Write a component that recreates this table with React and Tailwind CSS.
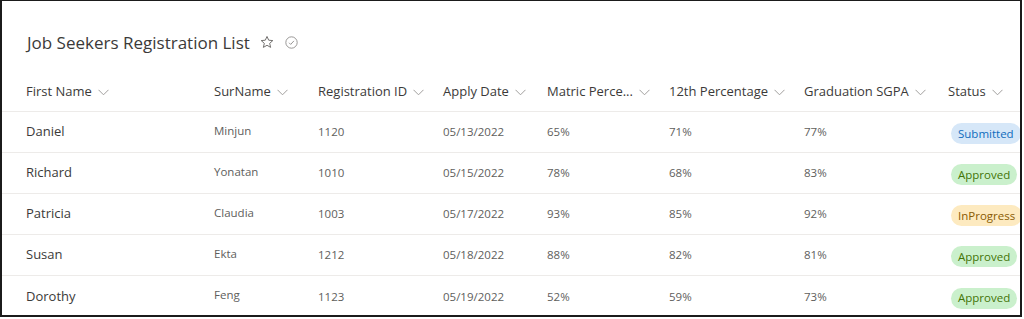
const font = { fontFamily: '"Open Sans", "Noto Sans", sans-serif' };

const columns = [
  { label: "First Name", w: "w-[188px]" },
  { label: "SurName", w: "w-[104px]" },
  { label: "Registration ID", w: "w-[125px]" },
  { label: "Apply Date", w: "w-[104px]" },
  { label: "Matric Perce...", w: "w-[122px]" },
  { label: "12th Percentage", w: "w-[135px]" },
  { label: "Graduation SGPA", w: "w-[144px]" },
  { label: "Status", w: "w-[70px]" },
];

const rows = [
  ["Daniel", "Minjun", "1120", "05/13/2022", "65%", "71%", "77%", "Submitted"],
  ["Richard", "Yonatan", "1010", "05/15/2022", "78%", "68%", "83%", "Approved"],
  ["Patricia", "Claudia", "1003", "05/17/2022", "93%", "85%", "92%", "InProgress"],
  ["Susan", "Ekta", "1212", "05/18/2022", "88%", "82%", "81%", "Approved"],
  ["Dorothy", "Feng", "1123", "05/19/2022", "52%", "59%", "73%", "Approved"],
];

const badgeStyles = {
  Submitted: "bg-[#d6e7f8] text-[#0f6cbd]",
  Approved: "bg-[#caf0cc] text-[#437406]",
  InProgress: "bg-[#fdeac0] text-[#8a5b00]",
};

function Chevron() {
  return (
    <svg width="11" height="7" viewBox="0 0 11 7" className="ml-[6px] mt-[1px] shrink-0">
      <path d="M0.5 0.8 L5.5 5.8 L10.5 0.8" fill="none" stroke="#a19f9d" strokeWidth="1" />
    </svg>
  );
}

export default function App() {
  return (
    <div className="bg-white w-[1024px] h-[319px]" style={font}>
      <div className="w-[1022px] h-[317px] border-t border-l-2 border-r-2 border-b-2 border-[#1b1b1b] overflow-hidden">
        {/* Title */}
        <div className="flex items-center h-[71px] pt-[11px] pl-[25px]">
          <h1 className="text-[17px] text-[#3b3a39] leading-none">Job Seekers Registration List</h1>
          <svg width="14" height="14" viewBox="0 0 24 24" className="ml-[10px]">
            <path
              d="M12 2.5l2.9 6.4 7 .7-5.3 4.7 1.6 6.9L12 17.6l-6.2 3.6 1.6-6.9L2.1 9.6l7-.7z"
              fill="none"
              stroke="#605e5c"
              strokeWidth="1.5"
              strokeLinejoin="round"
            />
          </svg>
          <svg width="13" height="13" viewBox="0 0 24 24" className="ml-[11px]">
            <circle cx="12" cy="12" r="10.5" fill="none" stroke="#8a8886" strokeWidth="1.6" />
            <path d="M7.5 12.5l3 3 6-6.5" fill="none" stroke="#8a8886" strokeWidth="1.6" />
          </svg>
        </div>

        {/* Header row */}
        <div className="flex items-center h-[40px] pl-[24px] border-b border-[#edebe9]">
          {columns.map((c) => (
            <div key={c.label} className={`${c.w} shrink-0 flex items-center text-[13px] text-[#3b3a39] whitespace-nowrap`}>
              {c.label}
              <Chevron />
            </div>
          ))}
        </div>

        {/* Data rows */}
        {rows.map((r, i) => (
          <div
            key={r[2]}
            className={`flex items-center h-[41px] pl-[24px] ${i < rows.length - 1 ? "border-b border-[#edebe9]" : ""}`}
          >
            <div className="w-[188px] shrink-0 text-[13px] text-[#3b3a39]">{r[0]}</div>
            <div className="w-[104px] shrink-0 text-[11.5px] text-[#605e5c] -mt-[3px]">{r[1]}</div>
            <div className="w-[125px] shrink-0 text-[11.5px] text-[#605e5c]">{r[2]}</div>
            <div className="w-[104px] shrink-0 text-[11.5px] text-[#605e5c]">{r[3]}</div>
            <div className="w-[122px] shrink-0 text-[11.5px] text-[#605e5c]">{r[4]}</div>
            <div className="w-[135px] shrink-0 text-[11.5px] text-[#605e5c]">{r[5]}</div>
            <div className="w-[144px] shrink-0 text-[11.5px] text-[#605e5c]">{r[6]}</div>
            <div className="shrink-0 pl-[3px]">
              <span
                className={`inline-flex items-center h-[21px] px-[7px] rounded-full text-[11.5px] whitespace-nowrap ${badgeStyles[r[7]]}`}
              >
                {r[7]}
              </span>
            </div>
          </div>
        ))}
      </div>
    </div>
  );
}
